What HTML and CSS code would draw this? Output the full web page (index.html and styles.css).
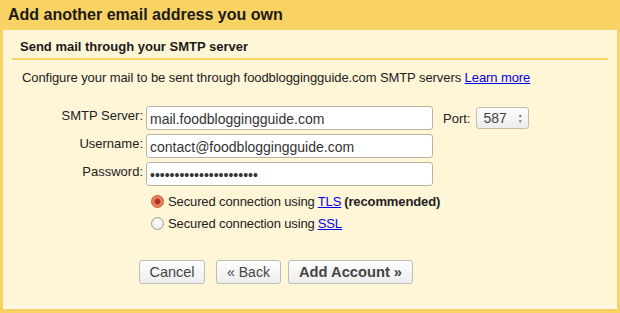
FILE: index.html
```
<!DOCTYPE html>
<html lang="en">
<head>
    <meta charset="utf-8">
    <title>Add another email address you own</title>
    <link rel="stylesheet" href="styles.css">
</head>
<body>
    <h1 class="titel">Add another email address you own</h1>

    <main class="panel">
        <h2 class="panel-head">Send mail through your SMTP server</h2>

        <p class="intro">Configure your mail to be sent through foodbloggingguide.com SMTP servers <a href="#">Learn more</a></p>

        <form class="smtp-form">
            <label class="felt-label">SMTP Server:</label>
            <div class="felt-row">
                <input type="text" class="felt" value="mail.foodbloggingguide.com">
                <label class="port-label">Port:</label>
                <span class="port">587<span class="pile"><span>&#9650;</span><span>&#9660;</span></span></span>
            </div>

            <label class="felt-label">Username:</label>
            <div class="felt-row">
                <input type="text" class="felt" value="contact@foodbloggingguide.com">
            </div>

            <label class="felt-label">Password:</label>
            <div class="felt-row">
                <input type="password" class="felt" value="1234567890123456789012">
            </div>

            <div class="radios">
                <label class="radio-row"><span class="radio valgt"></span>Secured connection using <a href="#">TLS</a> <b>(recommended)</b></label>
                <label class="radio-row"><span class="radio"></span>Secured connection using <a href="#">SSL</a></label>
            </div>
        </form>

        <div class="knapper">
            <button type="button" class="knap cancel">Cancel</button>
            <button type="button" class="knap back">&laquo; Back</button>
            <button type="button" class="knap primaer">Add Account &raquo;</button>
        </div>
    </main>
</body>
</html>
```

FILE: styles.css
```
body {
    margin: 0;
    background-color: #f9d264;
    font-family: "Liberation Sans", Arial, sans-serif;
    color: #222;
    height: 313px;
    overflow: hidden;
}

.titel {
    margin: 0;
    height: 30px;
    padding: 6px 8px 0;
    box-sizing: border-box;
    font-size: 16px;
    font-weight: bold;
    color: #1a1a1a;
}

.panel {
    margin: 0 3px;
    height: 279px;
    box-sizing: border-box;
    background-color: #fff5d7;
    border-bottom: 4px solid #fff8e4;
    padding: 0 9px;
}

.panel-head {
    margin: 0;
    padding: 9px 8px 0;
    height: 30px;
    box-sizing: border-box;
    font-size: 13px;
    font-weight: bold;
    color: #1a1a1a;
    border-bottom: 2px solid #fcd469;
}

.intro {
    margin: 0;
    padding: 10px 0 0 10px;
    font-size: 13px;
    letter-spacing: -0.08px;
    color: #222;
}

a {
    color: #0000ee;
    text-decoration: underline;
}

.smtp-form {
    display: grid;
    grid-template-columns: 131px auto;
    column-gap: 3px;
    row-gap: 4px;
    margin-top: 21px;
}

.felt-label {
    text-align: right;
    font-size: 13px;
    padding-top: 2px;
    color: #222;
}

.felt-row {
    display: flex;
    align-items: center;
    height: 24px;
}

.felt {
    width: 287px;
    height: 24px;
    box-sizing: border-box;
    border: 1px solid #b9b3a0;
    border-radius: 3px;
    background: #fff;
    font-family: "Liberation Sans", Arial, sans-serif;
    font-size: 14px;
    color: #333;
    padding: 1px 3px 0;
    margin: 0;
}

.port-label {
    font-size: 13px;
    margin-left: 10px;
    margin-right: 6px;
}

.port {
    display: flex;
    align-items: center;
    width: 53px;
    height: 22px;
    box-sizing: border-box;
    border: 1px solid #c2bcaa;
    border-radius: 3px;
    background: linear-gradient(#fdfdfd, #ececec);
    font-size: 14px;
    color: #444;
    padding-left: 6px;
}

.pile {
    display: flex;
    flex-direction: column;
    font-size: 5px;
    line-height: 6px;
    color: #777;
    margin-left: 11px;
}

.radios {
    grid-column: 2;
    padding: 0 0 0 5px;
}

.radio-row {
    display: flex;
    align-items: center;
    height: 22px;
    font-size: 13px;
    letter-spacing: -0.12px;
    color: #222;
}

.radio-row a,
.radio-row b {
    margin-left: 3px;
}

.radio {
    width: 11px;
    height: 11px;
    border-radius: 50%;
    border: 1px solid #9c9c9c;
    background: radial-gradient(circle at 50% 40%, #fff, #e4e4e4);
    margin-right: 4px;
    box-sizing: content-box;
}

.radio.valgt {
    border-color: #c8583a;
    background: radial-gradient(circle, #a43a22 0 2.5px, #f3835f 3.5px, #e76e49 100%);
}

.knapper {
    display: flex;
    gap: 7px;
    margin: 26px 0 0 127px;
}

.knap {
    height: 24px;
    box-sizing: border-box;
    padding: 0;
    border: 1px solid #bcbcbc;
    border-radius: 3px;
    background: linear-gradient(#fefefe, #ededed);
    font-family: "Liberation Sans", Arial, sans-serif;
    font-size: 14px;
    color: #444;
}

.cancel {
    width: 66px;
    font-size: 14.5px;
}

.back {
    width: 65px;
    margin-left: 4px;
}

.primaer {
    width: 125px;
    font-size: 14.7px;
    font-weight: bold;
}
```
